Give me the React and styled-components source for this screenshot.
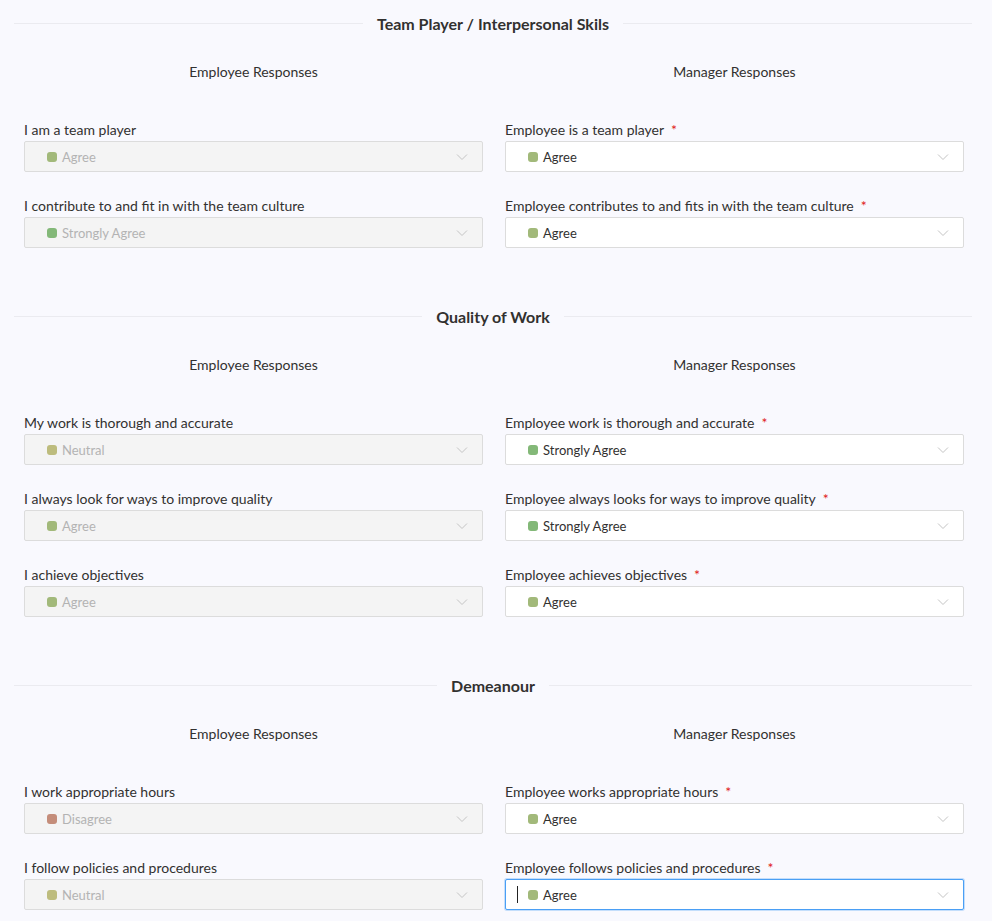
import React from "react";
import styled, { createGlobalStyle } from "styled-components";

const Global = createGlobalStyle`
  html, body { margin: 0; padding: 0; background: #f9f9fe; }
  body { font-family: "Lato", "Open Sans", sans-serif; color: #323130; }
`;

const Page = styled.div`
  padding: 0 20px 0 14px;
  box-sizing: border-box;
  width: 992px;
`;

const Section = styled.section`
  padding-bottom: 45px;
`;

const Divider = styled.div`
  display: flex;
  align-items: center;
  height: 46px;
  gap: 14px;
  &::before, &::after {
    content: "";
    flex: 1;
    height: 1px;
    background: #ebebf0;
  }
`;

const Title = styled.h2`
  margin: 0;
  font-size: 16px;
  font-weight: 700;
  color: #323130;
`;

const Columns = styled.div`
  display: grid;
  grid-template-columns: 459px 459px;
  column-gap: 22px;
  padding-left: 10px;
`;

const Column = styled.div`
  display: flex;
  flex-direction: column;
`;

const ColumnHead = styled.div`
  text-align: center;
  font-size: 14px;
  height: 20px;
  line-height: 20px;
  margin: 16px 0 38px;
`;

const Field = styled.div`
  display: flex;
  flex-direction: column;
  margin-bottom: 24px;
  &:last-child { margin-bottom: 0; }
`;

const Label = styled.label`
  font-size: 14px;
  line-height: 20px;
  height: 20px;
  margin-bottom: 1px;
  color: #323130;
`;

const Req = styled.span`
  color: #e02020;
  margin-left: 7px;
`;

const Select = styled.div`
  box-sizing: border-box;
  height: 31px;
  display: flex;
  align-items: center;
  padding: 0 14px 0 11px;
  border: 1px solid ${(p) => (p.$focused ? "#4a9ff5" : "#dcdcdc")};
  box-shadow: ${(p) => (p.$focused ? "0 0 0 1px rgba(74,159,245,0.3)" : "none")};
  border-radius: 2px;
  background: ${(p) => (p.$disabled ? "#f4f4f4" : "#ffffff")};
  font-size: 13px;
  color: ${(p) => (p.$disabled ? "#b3b3b3" : "#323130")};
`;

const Caret = styled.span`
  width: 1px;
  height: 17px;
  background: ${(p) => (p.$show ? "#222" : "transparent")};
  margin-right: 10px;
`;

const Dot = styled.span`
  width: 10px;
  height: 10px;
  border-radius: 3px;
  background: ${(p) => p.$color};
  margin-right: 5px;
  flex: none;
`;

const Value = styled.span`
  flex: 1;
`;

const colors = {
  "Strongly Agree": "#83b878",
  Agree: "#a2b97a",
  Neutral: "#bdbc7d",
  Disagree: "#c48d7a",
};

const Chevron = () => (
  <svg width="12" height="8" viewBox="0 0 12 8" fill="none">
    <path d="M1 1.5 L6 6.5 L11 1.5" stroke="#c4c4c4" strokeWidth="1" />
  </svg>
);

const Dropdown = ({ value, disabled, focused }) => (
  <Select $disabled={disabled} $focused={focused}>
    <Caret $show={focused} />
    <Dot $color={colors[value]} />
    <Value>{value}</Value>
    <Chevron />
  </Select>
);

const sections = [
  {
    title: "Team Player / Interpersonal Skils",
    rows: [
      ["I am a team player", "Agree", "Employee is a team player", "Agree"],
      [
        "I contribute to and fit in with the team culture",
        "Strongly Agree",
        "Employee contributes to and fits in with the team culture",
        "Agree",
      ],
    ],
  },
  {
    title: "Quality of Work",
    rows: [
      ["My work is thorough and accurate", "Neutral", "Employee work is thorough and accurate", "Strongly Agree"],
      [
        "I always look for ways to improve quality",
        "Agree",
        "Employee always looks for ways to improve quality",
        "Strongly Agree",
      ],
      ["I achieve objectives", "Agree", "Employee achieves objectives", "Agree"],
    ],
  },
  {
    title: "Demeanour",
    rows: [
      ["I work appropriate hours", "Disagree", "Employee works appropriate hours", "Agree"],
      ["I follow policies and procedures", "Neutral", "Employee follows policies and procedures", "Agree", true],
    ],
  },
];

export default function App() {
  return (
    <>
      <Global />
      <Page>
        {sections.map((s) => (
          <Section key={s.title}>
            <Divider>
              <Title>{s.title}</Title>
            </Divider>
            <Columns>
              <Column>
                <ColumnHead>Employee Responses</ColumnHead>
                {s.rows.map((r) => (
                  <Field key={r[0]}>
                    <Label>{r[0]}</Label>
                    <Dropdown value={r[1]} disabled />
                  </Field>
                ))}
              </Column>
              <Column>
                <ColumnHead>Manager Responses</ColumnHead>
                {s.rows.map((r) => (
                  <Field key={r[2]}>
                    <Label>
                      {r[2]}
                      <Req>*</Req>
                    </Label>
                    <Dropdown value={r[3]} focused={r[4]} />
                  </Field>
                ))}
              </Column>
            </Columns>
          </Section>
        ))}
      </Page>
    </>
  );
}
